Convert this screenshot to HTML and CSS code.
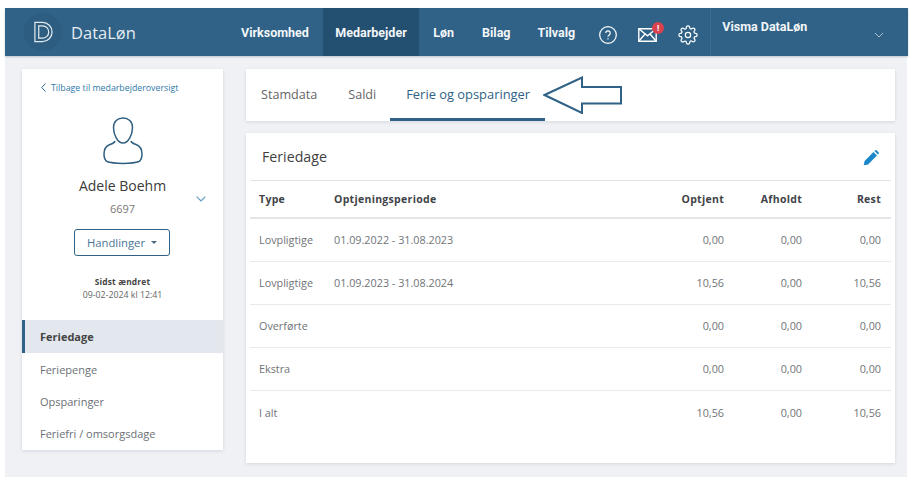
FILE: index.html
```html
<!DOCTYPE html>
<html lang="da">
<head>
<meta charset="utf-8">
<title>DataLøn</title>
<link rel="stylesheet" href="styles.css">
</head>
<body>
<div class="app">
  <header class="topbar">
    <div class="brand">
      <span class="logo"><svg width="21" height="24" viewBox="0 0 22 24" fill="none" stroke="#dfe8ee" stroke-width="1.3"><path d="M2 2h8a10 10 0 0 1 0 20H2z"/><path d="M6 5.500h4a6.500 6.500 0 0 1 0 13H6z"/></svg></span>
      <span class="brand-name">DataLøn</span>
    </div>
    <nav class="mainnav">
      <a class="nav-item first">Virksomhed</a>
      <a class="nav-item active">Medarbejder</a>
      <a class="nav-item">Løn</a>
      <a class="nav-item">Bilag</a>
      <a class="nav-item last">Tilvalg</a>
    </nav>
    <div class="tools">
      <svg class="tool" width="18" height="18" viewBox="0 0 18 18" fill="none" stroke="#fff" stroke-width="1.2"><circle cx="9" cy="9" r="8.300"/><path d="M6.800 7a2.200 2.200 0 1 1 3.400 1.900c-.8.5-1.200.9-1.200 1.800"/><path d="M9 12.200v1.300"/></svg>
      <span class="mail">
        <svg width="19" height="14" viewBox="0 0 19 14" fill="none" stroke="#fff" stroke-width="1.400"><path d="M.8.8h17.400v12.400H.8z"/><path d="M.8.8l8.700 7 8.700-7"/><path d="M.8 13.200l6.200-7.200M18.200 13.200L12 6"/></svg>
        <span class="badge">!</span>
      </span>
      <svg class="tool" width="20" height="20" viewBox="0 0 24 24" fill="none" stroke="#fff" stroke-width="1.500"><circle cx="12" cy="12" r="3.200"/><path d="M19.400 15a1.650 1.650 0 0 0 .33 1.820l.06.06a2 2 0 0 1 0 2.830 2 2 0 0 1-2.830 0l-.06-.06a1.650 1.650 0 0 0-1.820-.33 1.650 1.650 0 0 0-1 1.510V21a2 2 0 0 1-2 2 2 2 0 0 1-2-2v-.09A1.650 1.650 0 0 0 9 19.400a1.650 1.650 0 0 0-1.820.33l-.06.06a2 2 0 0 1-2.830 0 2 2 0 0 1 0-2.830l.06-.06a1.650 1.650 0 0 0 .33-1.820 1.650 1.650 0 0 0-1.510-1H3a2 2 0 0 1-2-2 2 2 0 0 1 2-2h.09A1.650 1.650 0 0 0 4.600 9a1.650 1.650 0 0 0-.33-1.820l-.06-.06a2 2 0 0 1 0-2.830 2 2 0 0 1 2.830 0l.06.06a1.650 1.650 0 0 0 1.820.33H9a1.650 1.650 0 0 0 1-1.510V3a2 2 0 0 1 2-2 2 2 0 0 1 2 2v.09a1.650 1.650 0 0 0 1 1.510 1.650 1.650 0 0 0 1.820-.33l.06-.06a2 2 0 0 1 2.830 0 2 2 0 0 1 0 2.830l-.06.06a1.650 1.650 0 0 0-.33 1.820V9a1.650 1.650 0 0 0 1.510 1H21a2 2 0 0 1 2 2 2 2 0 0 1-2 2h-.09a1.650 1.650 0 0 0-1.510 1z"/></svg>
    </div>
    <div class="account">
      <span class="account-name">Visma DataLøn</span>
      <svg class="account-chev" width="10" height="6" viewBox="0 0 10 6" fill="none" stroke="#a9c1d1" stroke-width="1"><path d="M1 1l4 4 4-4"/></svg>
    </div>
  </header>

  <div class="content">
    <aside class="sidebar">
      <div class="profile">
        <a class="back"><svg width="5" height="9" viewBox="0 0 5 9" fill="none" stroke="#2f6f9a" stroke-width="1"><path d="M4.500.5L.7 4.500l3.800 4"/></svg>Tilbage til medarbejderoversigt</a>
        <svg class="avatar" width="42" height="48" viewBox="0 0 42 48" fill="none" stroke="#2f5f80" stroke-width="1.500"><path d="M21 1c-5.500 0-9.500 3.500-9.500 9.500 0 7 4 15.500 9.500 15.500s9.500-8.500 9.500-15.500C30.500 4.500 26.500 1 21 1z"/><path d="M13 24c-.5 2-2 2.500-5 3.500C4 29 2 32 2 37c0 3 .5 6 3 7.500 6 2.500 26 2.500 32 0 2.500-1.500 3-4.500 3-7.500 0-5-2-8-6-9.500-3-1-4.500-1.500-5-3.500"/></svg>
        <div class="person">
          <div class="person-name">Adele Boehm</div>
          <div class="person-id">6697</div>
          <svg class="person-chev" width="10" height="6" viewBox="0 0 10 6" fill="none" stroke="#5f9cc5" stroke-width="1.200"><path d="M.7.7L5 5l4.300-4.300"/></svg>
        </div>
        <button class="actions">Handlinger<span class="caret"></span></button>
        <div class="changed-label">Sidst ændret</div>
        <div class="changed-date">09-02-2024 kl 12:41</div>
      </div>
      <ul class="sidemenu">
        <li class="side-item current">Feriedage</li>
        <li class="side-item">Feriepenge</li>
        <li class="side-item">Opsparinger</li>
        <li class="side-item">Feriefri / omsorgsdage</li>
      </ul>
    </aside>

    <main class="main">
      <div class="tabs">
        <a class="tab">Stamdata</a>
        <a class="tab">Saldi</a>
        <a class="tab selected">Ferie og opsparinger</a>
        <svg class="arrow" width="80" height="38" viewBox="0 0 80 38" fill="#fff" stroke="#2f6286" stroke-width="2"><path d="M1.500 19L39 1.500V11h39v16.500H39V37z"/></svg>
      </div>
      <section class="card">
        <div class="card-head">
          <h2 class="card-title">Feriedage</h2>
          <svg class="pencil" width="16" height="16" viewBox="0 0 18 18" fill="#1b87c9"><path d="M.8 17.200l1-4.900L11.800 2.300l3.900 3.900-10 10z"/><path d="M12.900 1.200l1-.9c.5-.4 1-.4 1.400 0l2.400 2.400c.4.400.4 1 0 1.400l-.9 1z"/></svg>
        </div>
        <table class="grid">
          <thead>
            <tr><th>Type</th><th>Optjeningsperiode</th><th class="num">Optjent</th><th class="num">Afholdt</th><th class="num">Rest</th></tr>
          </thead>
          <tbody>
            <tr><td>Lovpligtige</td><td>01.09.2022 - 31.08.2023</td><td class="num">0,00</td><td class="num">0,00</td><td class="num">0,00</td></tr>
            <tr><td>Lovpligtige</td><td>01.09.2023 - 31.08.2024</td><td class="num">10,56</td><td class="num">0,00</td><td class="num">10,56</td></tr>
            <tr><td>Overførte</td><td></td><td class="num">0,00</td><td class="num">0,00</td><td class="num">0,00</td></tr>
            <tr><td>Ekstra</td><td></td><td class="num">0,00</td><td class="num">0,00</td><td class="num">0,00</td></tr>
            <tr class="total"><td>I alt</td><td></td><td class="num">10,56</td><td class="num">0,00</td><td class="num">10,56</td></tr>
          </tbody>
        </table>
      </section>
    </main>
  </div>
</div>
</body>
</html>
```
FILE: styles.css
```css
* { box-sizing: border-box; }
html, body { margin: 0; padding: 0; background: #fff; }
body { padding: 8px 10px 5px 5px; height: 482px; overflow: hidden; font-family: "Open Sans", sans-serif; color: #555; }
.app { height: 469px; background: #eff1f5; display: flex; flex-direction: column; }

.topbar { height: 48px; background: #2f6286; display: flex; align-items: stretch; color: #fff; box-shadow: 0 1px 2px rgba(40,60,80,.25); flex: none; margin-right: -1px; }
.brand { width: 223px; display: flex; align-items: center; padding-left: 19px; gap: 9px; flex: none; }
.logo { width: 38px; height: 38px; border-radius: 50%; background: #2d5e81; display: flex; align-items: center; justify-content: center; }
.brand-name { font-size: 16.500px; color: #e4ecf2; }
.mainnav { display: flex; flex: none; }
.nav-item { font-family: "Roboto", sans-serif; font-size: 12.500px; font-weight: 700; display: flex; align-items: center; padding: 0 14px; color: #f2f6f9; }
.nav-item.first { padding: 0 14px 0 13px; }
.nav-item.active { background: #234f70; padding: 0 12.500px; }
.nav-item.last { padding: 0 13px; }
.tools { display: flex; align-items: center; width: 122px; padding: 6px 0 0 11px; flex: none; }
.tool { flex: none; }
.mail { position: relative; display: flex; margin: 0 21px; }
.badge { position: absolute; right: -7px; top: -6px; width: 12px; height: 12px; border-radius: 50%; background: #d8414d; color: #fff; font-size: 8px; font-weight: 700; text-align: center; line-height: 12px; }
.account { flex: 1; border-left: 1px solid #3a6d90; position: relative; padding: 6px 0 0 11px; }
.account-name { font-family: "Roboto", sans-serif; font-size: 12.500px; font-weight: 700; color: #f2f6f9; }
.account-chev { position: absolute; right: 24px; top: 24px; }

.content { flex: 1; display: flex; align-items: flex-start; padding: 13px 12px 0 17px; gap: 23px; }
.sidebar { width: 201px; flex: none; background: #fff; box-shadow: 0 1px 3px rgba(60,70,90,.15); }
.profile { height: 251px; padding-top: 12px; display: flex; flex-direction: column; align-items: center; }
.back { align-self: flex-start; margin-left: 19px; font-size: 8.800px; color: #2f79a8; display: flex; align-items: center; gap: 5px; height: 13px; white-space: nowrap; }
.avatar { margin-top: 23px; flex: none; }
.person { position: relative; width: 100%; text-align: center; margin-top: 11px; }
.person-name { font-size: 14px; font-weight: 500; color: #3a3a3a; line-height: 19px; }
.person-id { font-size: 11px; color: #777; line-height: 17px; margin-top: 5px; }
.person-chev { position: absolute; right: 17px; top: 20px; }
.actions { margin: 12px 1px 0 0; width: 96px; height: 27px; border: 1px solid #2f6286; border-radius: 3px; background: #fff; color: #4a7594; font: 11.300px "Open Sans", sans-serif; display: flex; align-items: center; justify-content: center; gap: 6px; padding: 0; }
.caret { width: 0; height: 0; border-left: 3px solid transparent; border-right: 3px solid transparent; border-top: 3px solid #4a6a85; }
.changed-label { margin-top: 20px; font-size: 8.400px; font-weight: 700; color: #444; line-height: 11px; letter-spacing: .2px; }
.changed-date { font-size: 8.800px; color: #666; line-height: 13px; margin-top: 2px; }
.sidemenu { list-style: none; margin: 0; padding: 0; }
.side-item { height: 32px; padding-left: 18px; font-size: 11px; color: #6b7076; display: flex; align-items: center; }
.side-item.current { height: 33px; background: #e3e8ee; border-left: 3px solid #2f6286; padding-left: 15px; font-weight: 700; color: #444; }
.side-item:last-child { height: 33px; padding-bottom: 1px; }

.main { flex: 1; min-width: 0; display: flex; flex-direction: column; gap: 12px; }
.tabs { height: 52px; background: #fff; box-shadow: 0 1px 3px rgba(60,70,90,.15); display: flex; position: relative; }
.tab { font-size: 12.600px; color: #666; display: flex; align-items: center; padding: 0 15px 2px; height: 52px; }
.tab + .tab { margin-left: 1px; }
.tab.selected { margin-left: -1px; font-size: 12.900px; color: #2f6286; border-bottom: 3px solid #2f6286; padding: 0 15px 0 16px; }
.arrow { position: absolute; left: 297px; top: 7px; }
.card { background: #fff; height: 330px; box-shadow: 0 1px 3px rgba(60,70,90,.15); padding: 0 4px; }
.card-head { height: 48px; display: flex; align-items: center; justify-content: space-between; padding: 0 12px; border-bottom: 1px solid #dfe2e6; }
.pencil { margin-top: 2px; }
.card-title { margin: 0; font-size: 14.200px; font-weight: 500; color: #3f3f3f; }
.grid { width: 100%; border-collapse: collapse; table-layout: fixed; font-size: 10.800px; color: #707478; }
.grid th { height: 37px; font-size: 10.500px; font-weight: 700; color: #3f4347; text-align: left; padding: 0 0 0 9px; border-bottom: 2px solid #e3e5e8; letter-spacing: .3px; }
.grid td { height: 43px; padding: 0 0 0 9px; border-bottom: 1px solid #e8eaed; }
.grid tr.total td { border-bottom: 0; padding-top: 2px; }
.grid th:nth-child(1) { width: 75px; }
.grid th:nth-child(3) { width: 100px; }
.grid th:nth-child(4) { width: 78px; }
.grid th:nth-child(5) { width: 79px; }
.grid th.num, .grid td.num { text-align: right; padding-right: 10px; }
```
